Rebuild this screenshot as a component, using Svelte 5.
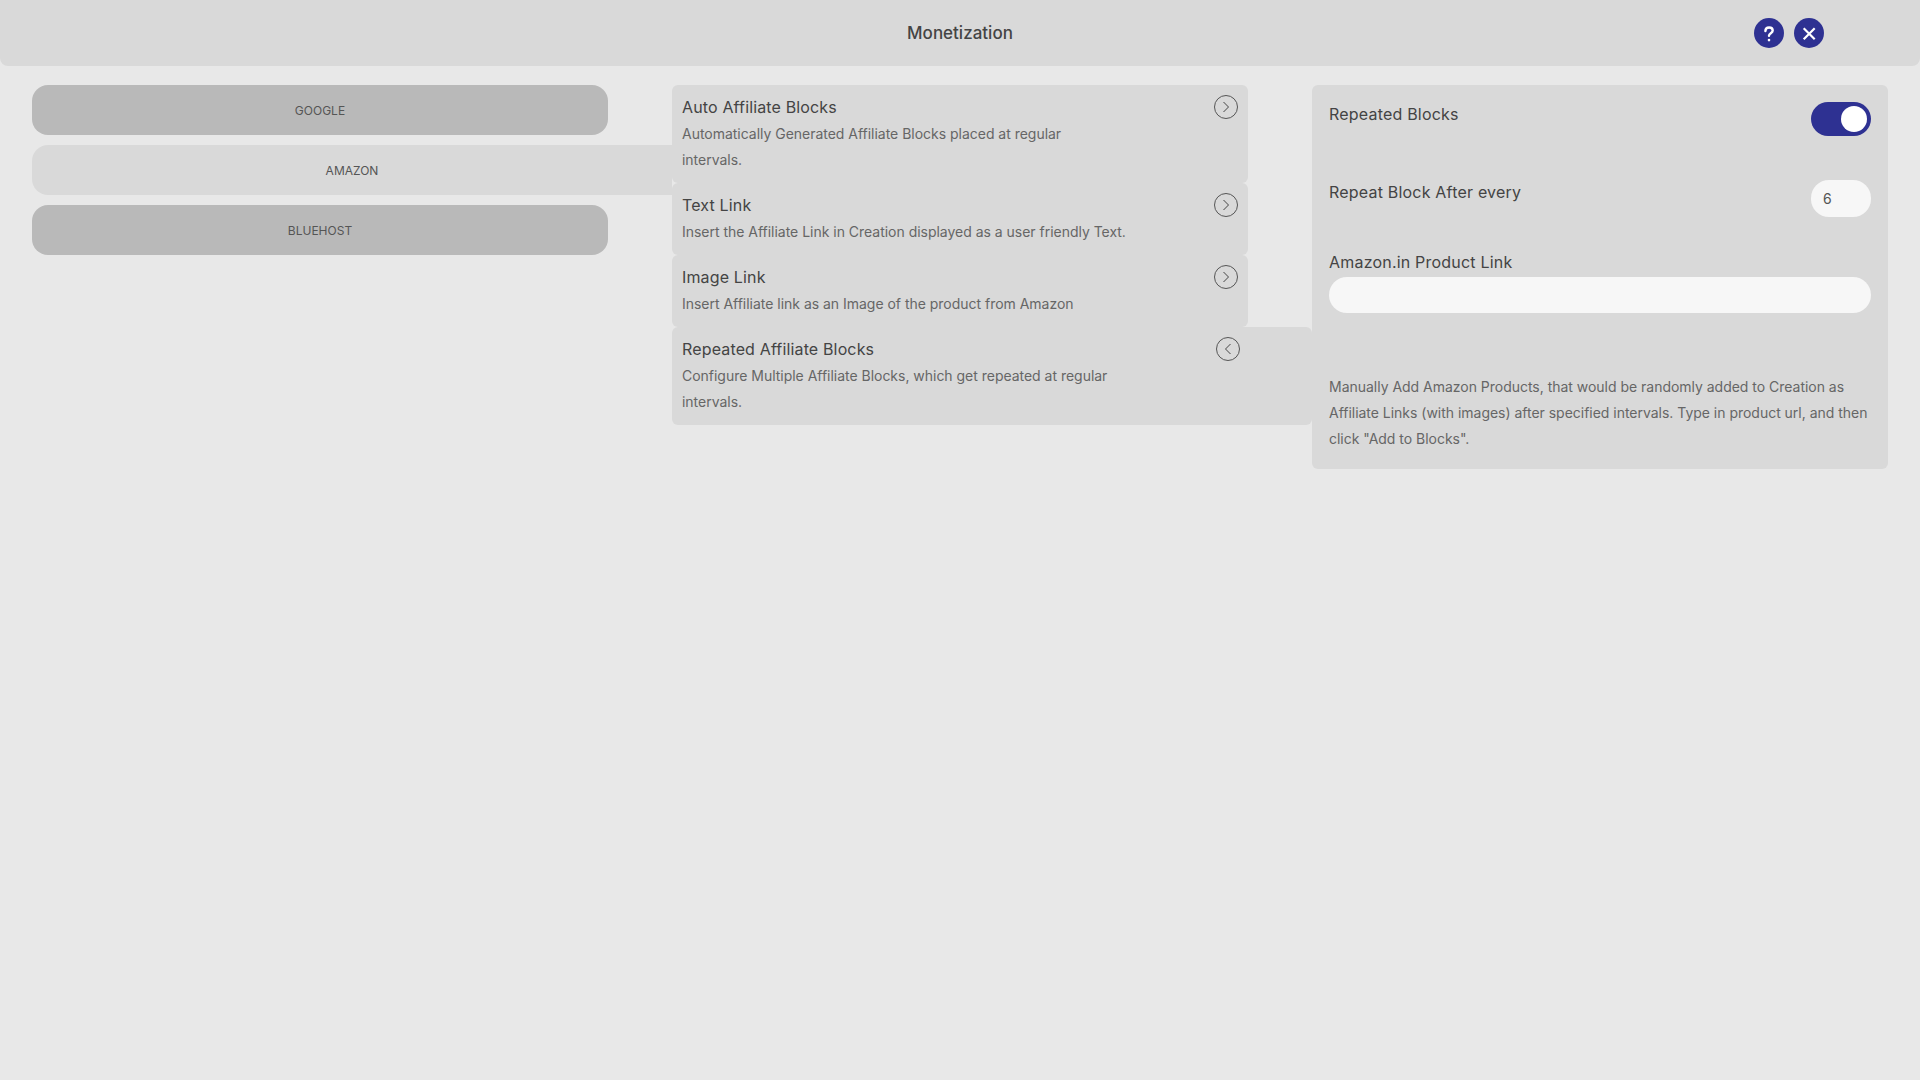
<script>
    let activeTab = $state('AMAZON');
    let activeOption = $state('Repeated Affiliate Blocks');
    let repeated = $state(true);
    let repeatAfter = $state('6');
    let productLink = $state('');

    const tabs = ['GOOGLE', 'AMAZON', 'BLUEHOST'];

    const options = [
        { title: 'Auto Affiliate Blocks', text: 'Automatically Generated Affiliate Blocks placed at regular\nintervals.' },
        { title: 'Text Link', text: 'Insert the Affiliate Link in Creation displayed as a user friendly Text.' },
        { title: 'Image Link', text: 'Insert Affiliate link as an Image of the product from Amazon' },
        { title: 'Repeated Affiliate Blocks', text: 'Configure Multiple Affiliate Blocks, which get repeated at regular\nintervals.' }
    ];
</script>

<main>
    <header>
        <span></span>
        <h1>Monetization</h1>
        <div class="actions">
            <button class="round" aria-label="Help">
                <svg width="30" height="30" viewBox="0 0 30 30" fill="none" stroke="#fff" stroke-width="2.4" stroke-linecap="round">
                    <path d="M11.4 13c0-2.2 1.6-3.5 3.7-3.5s3.6 1.3 3.6 3.1c0 2.7-3.7 2.6-3.7 5.2" />
                    <path d="M15 22v.1" stroke-width="2.6" />
                </svg>
            </button>
            <button class="round" aria-label="Close">
                <svg width="30" height="30" viewBox="0 0 30 30" fill="none" stroke="#fff" stroke-width="2.2">
                    <path d="M9.7 10.3l11 11M20.7 10.3l-11 11" />
                </svg>
            </button>
        </div>
    </header>

    <div class="columns">
        <nav class="tabs">
            {#each tabs as tab}
                <button class="tab" class:active={tab === activeTab} onclick={() => (activeTab = tab)}>{tab}</button>
            {/each}
        </nav>

        <div class="options">
            {#each options as option}
                {@const open = option.title === activeOption}
                <div class="option" class:open>
                    <div class="option-body">
                        <h3>{option.title}</h3>
                        <p>{option.text}</p>
                    </div>
                    <button class="chevron" aria-label="Toggle" onclick={() => (activeOption = option.title)}>
                        <svg width="24" height="24" viewBox="0 0 24 24" fill="none" stroke="#333" stroke-width="0.9">
                            <circle cx="12" cy="12" r="11.5" stroke="#555" stroke-width="1" />
                            {#if open}
                                <path d="M14.5 7L9.5 12l5 5" />
                            {:else}
                                <path d="M9.5 7l5 5-5 5" />
                            {/if}
                        </svg>
                    </button>
                </div>
            {/each}
        </div>

        <section class="panel">
            <div class="row toggle-row">
                <span class="label">Repeated Blocks</span>
                <button class="switch" class:on={repeated} aria-label="Repeated Blocks" onclick={() => (repeated = !repeated)}>
                    <span class="knob"></span>
                </button>
            </div>
            <div class="row count-row">
                <label class="label" for="repeat-after">Repeat Block After every</label>
                <input id="repeat-after" class="field small" bind:value={repeatAfter} />
            </div>
            <label class="label" for="product-link">Amazon.in Product Link</label>
            <input id="product-link" class="field" bind:value={productLink} />
            <p class="hint">Manually Add Amazon Products, that would be randomly added to Creation as
Affiliate Links (with images) after specified intervals. Type in product url, and then
click "Add to Blocks".</p>
        </section>
    </div>
</main>

<style>
    :global(body) {
        margin: 0;
        background: #e8e8e8;
        font-family: Inter, "Open Sans", sans-serif;
        color: #444;
    }

    main {
        min-height: 1080px;
    }

    button {
        border: none;
        padding: 0;
        font: inherit;
        cursor: pointer;
    }

    header {
        height: 66px;
        display: grid;
        grid-template-columns: 1fr auto 1fr;
        align-items: center;
        background: #d9d9d9;
        border-radius: 0 0 8px 8px;
    }

    h1 {
        margin: 0 0 1px;
        font-size: 17px;
        font-weight: 500;
        color: #444;
    }

    .actions {
        display: flex;
        justify-content: flex-end;
        gap: 10px;
        padding-right: 96px;
    }

    .round {
        width: 30px;
        height: 30px;
        border-radius: 50%;
        background: #2e3192;
        display: block;
    }

    .round svg {
        display: block;
    }

    .columns {
        display: grid;
        grid-template-columns: 576px 576px 576px;
        gap: 64px;
        padding: 19px 32px 0;
        align-items: start;
    }

    .tabs {
        display: flex;
        flex-direction: column;
        gap: 10px;
    }

    .tab {
        height: 50px;
        width: 576px;
        border-radius: 16px;
        background: #b9b9b9;
        color: #555;
        font-size: 12px;
    }

    .tab.active {
        width: 640px;
        background: #d9d9d9;
        border-radius: 16px 0 0 16px;
    }

    .options {
        display: flex;
        flex-direction: column;
    }

    .option {
        display: flex;
        justify-content: space-between;
        align-items: flex-start;
        width: 576px;
        box-sizing: border-box;
        padding: 10px;
        background: #d9d9d9;
        border-radius: 6px;
        position: relative;
    }

    .option.open {
        width: 640px;
        padding-right: 72px;
    }

    .option-body {
        width: 500px;
    }

    h3 {
        margin: 0 0 2px;
        font-size: 16px;
        font-weight: 400;
        line-height: 24px;
        letter-spacing: 0.15px;
        color: #444;
    }

    .option p {
        margin: 0;
        font-size: 14px;
        line-height: 26px;
        letter-spacing: -0.02px;
        color: #666;
        white-space: pre-line;
    }

    .chevron {
        background: none;
        width: 24px;
        height: 24px;
        flex: none;
    }

    .chevron svg {
        display: block;
    }

    .panel {
        background: #d9d9d9;
        border-radius: 6px;
        padding: 17px;
        height: 384px;
        box-sizing: border-box;
        display: flex;
        flex-direction: column;
    }

    .row {
        display: flex;
        justify-content: space-between;
        align-items: flex-start;
    }

    .toggle-row {
        margin-bottom: 44px;
    }

    .count-row {
        margin-bottom: 33px;
    }

    .label {
        font-size: 16px;
        line-height: 25px;
        letter-spacing: 0.2px;
        color: #444;
    }

    .switch {
        width: 60px;
        height: 34px;
        border-radius: 17px;
        background: #b9b9b9;
        display: flex;
        align-items: center;
        padding: 0 4px;
        box-sizing: border-box;
    }

    .switch.on {
        background: #2e3192;
        justify-content: flex-end;
    }

    .knob {
        width: 26px;
        height: 26px;
        border-radius: 50%;
        background: #fff;
    }

    .field {
        display: block;
        width: 100%;
        height: 37px;
        box-sizing: border-box;
        margin-top: 2px;
        padding: 0 12px;
        border: none;
        border-radius: 18px;
        background: #f7f7f7;
        font: inherit;
        font-size: 14px;
        color: #555;
        outline: none;
    }

    .field.small {
        width: 60px;
        margin-top: 0;
    }

    .hint {
        margin: 61px 0 0;
        font-size: 14px;
        line-height: 26px;
        letter-spacing: -0.02px;
        color: #666;
        white-space: pre-line;
    }
</style>
